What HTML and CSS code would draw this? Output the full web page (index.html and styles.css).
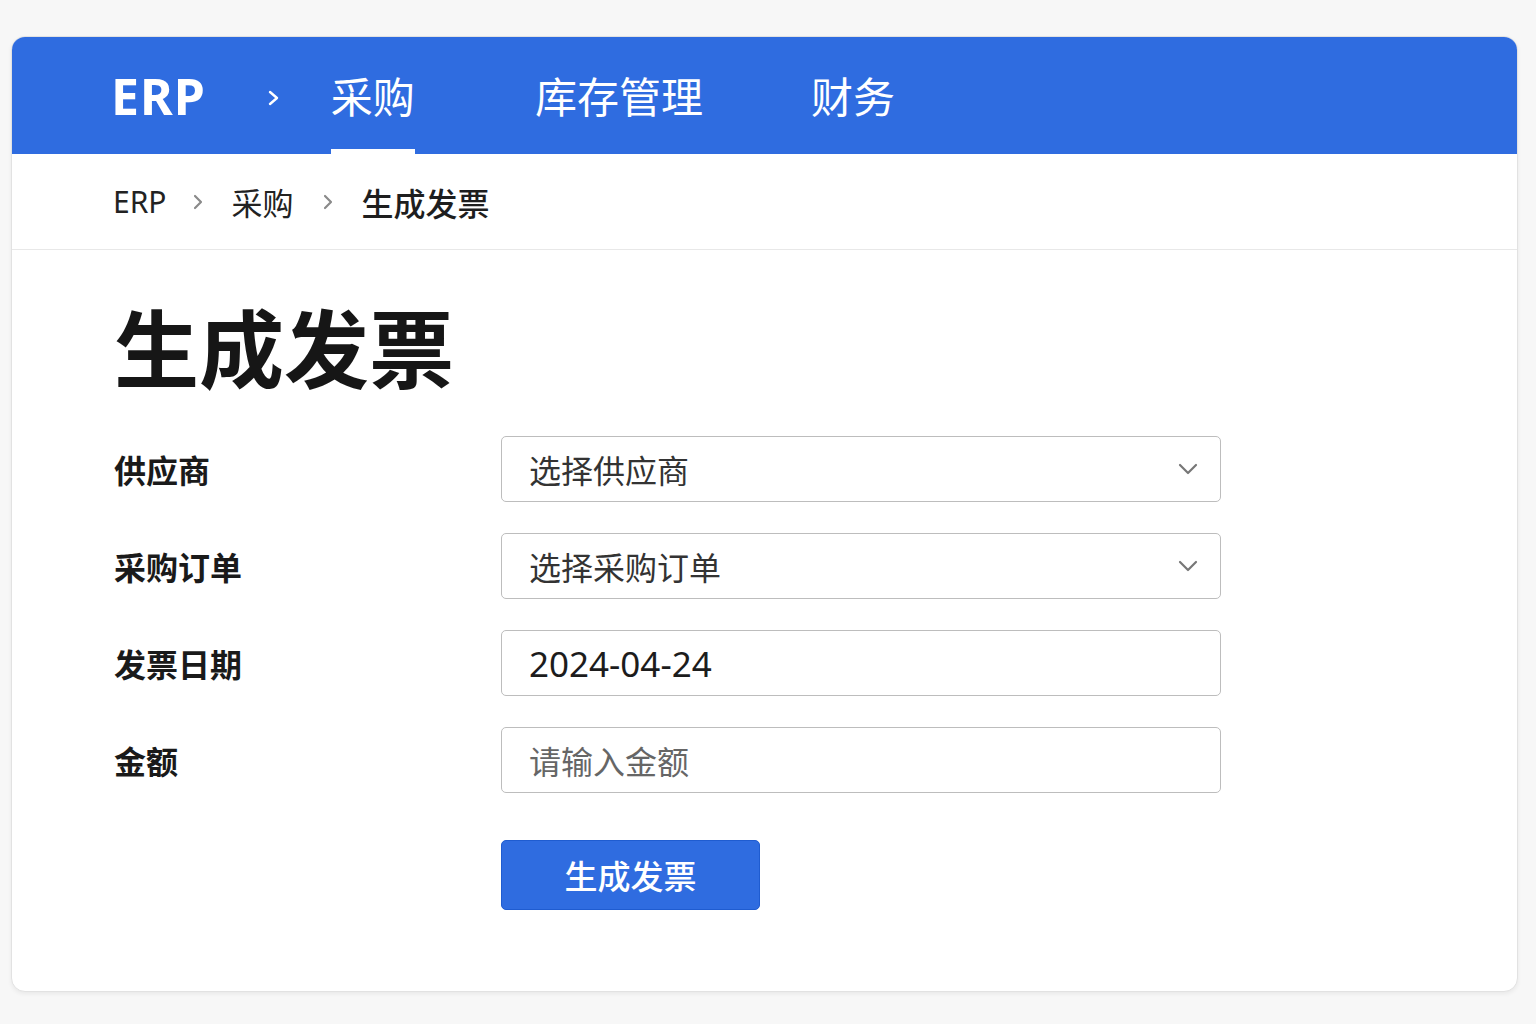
FILE: index.html
```html
<!DOCTYPE html>
<html lang="zh-CN">
<head>
  <meta charset="UTF-8" />
  <meta name="viewport" content="width=device-width, initial-scale=1.0" />
  <title>生成发票 - ERP</title>
  <link rel="stylesheet" href="styles.css">
</head>
<body>
  <div class="card">
    <header class="topbar">
      <span class="brand">ERP</span>
      <span class="sep">
        <svg width="14" height="20" viewBox="0 0 14 20"><path d="M3 4l7 6-7 6" fill="none" stroke="#fff" stroke-width="2.4" stroke-linecap="round" stroke-linejoin="round"/></svg>
      </span>
      <nav class="tabs">
        <a class="tab active" href="#">采购</a>
        <a class="tab" href="#">库存管理</a>
        <a class="tab" href="#">财务</a>
      </nav>
    </header>

    <div class="crumbs">
      <span class="root">ERP</span>
      <svg class="crumb-sep" width="12" height="18" viewBox="0 0 12 18"><path d="M3 3l6 6-6 6" fill="none" stroke="#8a8a8a" stroke-width="2.2" stroke-linecap="round" stroke-linejoin="round"/></svg>
      <span>采购</span>
      <svg class="crumb-sep" width="12" height="18" viewBox="0 0 12 18"><path d="M3 3l6 6-6 6" fill="none" stroke="#8a8a8a" stroke-width="2.2" stroke-linecap="round" stroke-linejoin="round"/></svg>
      <span class="current">生成发票</span>
    </div>

    <main class="content">
      <h1>生成发票</h1>

      <form class="form">
        <label class="label">供应商</label>
        <div class="field select">
          <span>选择供应商</span>
          <svg width="20" height="12" viewBox="0 0 20 12"><path d="M2 2l8 8 8-8" fill="none" stroke="#777" stroke-width="2.2" stroke-linecap="round" stroke-linejoin="round"/></svg>
        </div>

        <label class="label">采购订单</label>
        <div class="field select">
          <span>选择采购订单</span>
          <svg width="20" height="12" viewBox="0 0 20 12"><path d="M2 2l8 8 8-8" fill="none" stroke="#777" stroke-width="2.2" stroke-linecap="round" stroke-linejoin="round"/></svg>
        </div>

        <label class="label">发票日期</label>
        <div class="field value">2024-04-24</div>

        <label class="label">金额</label>
        <div class="field placeholder">请输入金额</div>

        <span></span>
        <div class="actions">
          <button type="button" class="submit">生成发票</button>
        </div>
      </form>
    </main>
  </div>
</body>
</html>
```

FILE: styles.css
```css
:root {
  font-family: "Noto Sans CJK SC", "Noto Sans", sans-serif;
}

body {
  margin: 0;
  background: #f7f7f7;
  padding: 36px 18px 32px 11px;
}

.card {
  background: #fff;
  border: 1px solid #e2e2e2;
  border-radius: 14px;
  box-shadow: 0 2px 4px rgba(0, 0, 0, 0.06);
  height: 956px;
  box-sizing: border-box;
  overflow: hidden;
}

.topbar {
  display: flex;
  align-items: center;
  height: 117px;
  background: #2f6ce0;
  padding-left: 99px;
  box-sizing: border-box;
}

.brand {
  font-family: "Noto Sans", sans-serif;
  font-size: 50px;
  font-weight: 700;
  color: #fff;
  letter-spacing: 1px;
}

.sep {
  display: flex;
  margin: 4px 0 0 61px;
}

.tabs {
  display: flex;
  align-self: stretch;
  margin-left: 50px;
  gap: 120px;
}

.tab {
  display: flex;
  align-items: center;
  font-size: 42px;
  color: #fff;
  text-decoration: none;
  border-bottom: 5px solid transparent;
  padding-top: 2px;
}

.tab.active {
  border-bottom-color: #fff;
}

.tabs .tab:nth-child(3) {
  margin-left: -12px;
}

.crumbs {
  display: flex;
  align-items: center;
  gap: 23px;
  height: 95px;
  padding-left: 101px;
  border-bottom: 1px solid #e8e8e8;
  font-size: 31px;
  color: #222;
}

.crumbs .root {
  font-family: "Noto Sans", sans-serif;
  font-size: 30px;
  margin-right: -3px;
}

.crumbs .current {
  font-size: 32px;
  font-weight: 500;
  color: #1e1e1e;
}

.crumb-sep {
  margin: 0 5px;
}

.content {
  padding: 44px 0 0 102px;
}

h1 {
  margin: 0 0 40px;
  font-size: 85px;
  font-weight: 700;
  line-height: 1.2;
  color: #161616;
}

.form {
  display: grid;
  grid-template-columns: 387px 720px;
  row-gap: 31px;
  align-items: center;
}

.label {
  font-size: 32px;
  font-weight: 700;
  color: #1a1a1a;
}

.field {
  display: flex;
  align-items: center;
  height: 66px;
  box-sizing: border-box;
  padding: 0 22px 0 27px;
  border: 1px solid #bdbdbd;
  border-radius: 5px;
  font-size: 32px;
  color: #333;
}

.select {
  justify-content: space-between;
}

.value {
  font-family: "Noto Sans", sans-serif;
  font-size: 35px;
  color: #1c1c1c;
}

.placeholder {
  color: #666;
}

.actions {
  padding-top: 16px;
}

.submit {
  width: 259px;
  height: 70px;
  border: 1px solid #1f5cd0;
  border-radius: 5px;
  background: #2f6ce0;
  color: #fff;
  font-family: inherit;
  font-size: 33px;
  font-weight: 500;
  cursor: pointer;
}

.submit:hover {
  opacity: 0.9;
}
```
